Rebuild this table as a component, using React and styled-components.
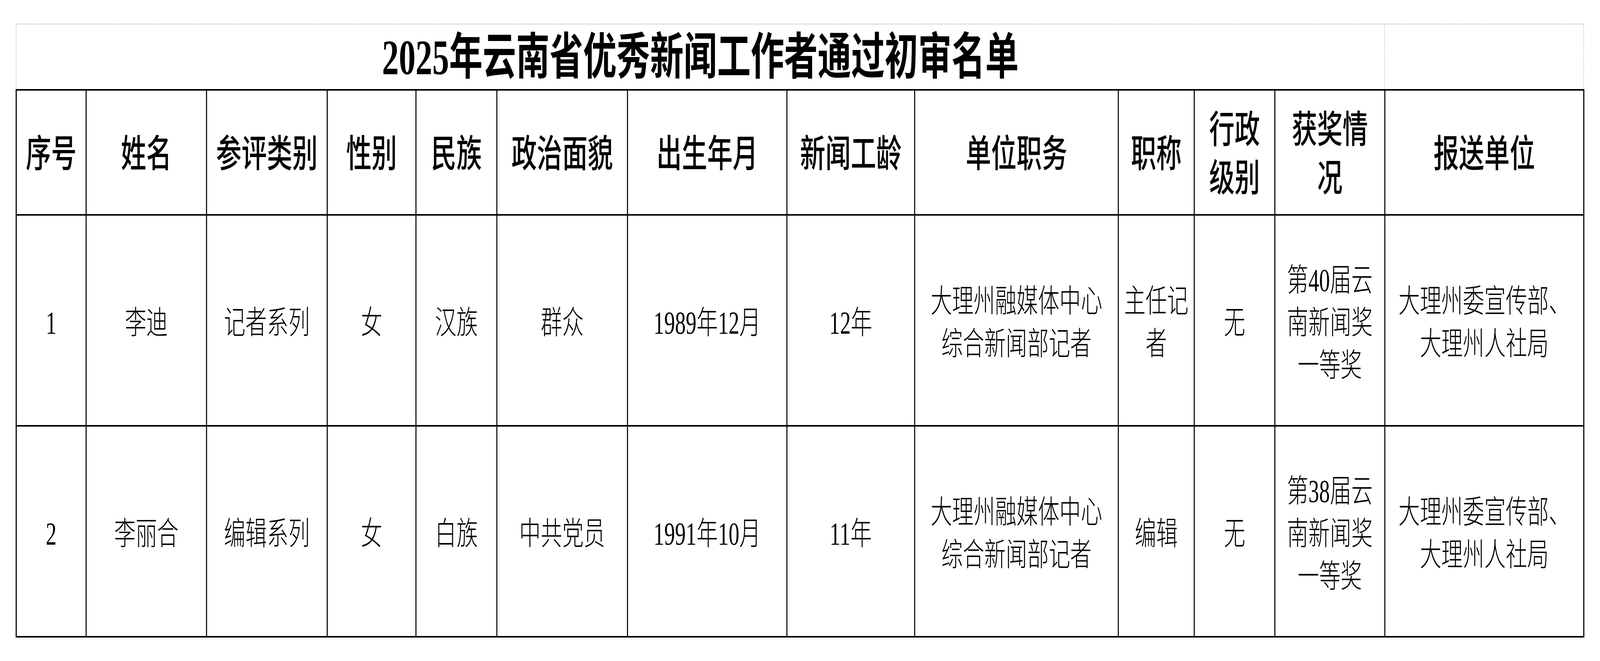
import React, { useLayoutEffect, useState } from 'react'
import styled, { createGlobalStyle } from 'styled-components'

const GlobalStyle = createGlobalStyle`
    html, body {
        margin: 0;
        padding: 0;
        background: #fff;
        overflow: hidden;
    }
    body {
        font-family: "Liberation Serif", "Noto Sans CJK SC", serif;
        color: #000;
    }
`

// the sheet is drawn at 6112 x 1692 and fitted to the window
const SHEET_W = 6112
const SHEET_H = 1692

// interior widths between the 4px grid lines
const COLS = [263, 456, 457, 335, 305, 495, 605, 484, 774, 286, 304, 416, 756]

const Viewport = styled.div`
    width: 100vw;
    height: 100vh;
    overflow: hidden;
`

const Sheet = styled.div`
    width: ${SHEET_W}px;
    height: ${SHEET_H}px;
    box-sizing: border-box;
    padding: 61px 0 0 60px;
    transform-origin: 0 0;
`

const TitleRow = styled.div`
    display: grid;
    grid-template-columns: 5228px 761px;
    height: 167px;
    margin-left: 1px;
`

const TitleCell = styled.div`
    display: flex;
    align-items: center;
    justify-content: center;
    box-sizing: border-box;
    border-top: 1px dotted #555;
    border-left: 1px dotted #555;
    border-right: ${p => (p.$last ? '1px dotted #555' : 'none')};
    font-family: "Liberation Serif", "Noto Sans CJK SC", serif;
    font-weight: 700;
    font-size: 128px;
    line-height: 1;
    white-space: nowrap;
    padding-top: 4px;
`

const Grid = styled.div`
    display: grid;
    grid-template-columns: ${COLS.map(w => `${w}px`).join(' ')};
    grid-template-rows: 316px 536px 536px;
    gap: 4px;
    width: fit-content;
    background: #000;
    border: 4px solid #000;
`

const Cell = styled.div`
    display: flex;
    align-items: center;
    justify-content: center;
    text-align: center;
    background: #fff;
    white-space: pre-line;
    box-sizing: border-box;
    padding-top: ${p => (p.$head ? '10px' : '12px')};
    font-family: "Liberation Serif", "Noto Sans CJK SC", serif;
    font-size: ${p => (p.$head ? '97px' : '82px')};
    line-height: ${p => (p.$head ? '124px' : '109px')};
    font-weight: ${p => (p.$head ? 500 : 300)};
`

const HEAD = [
    '序号', '姓名', '参评类别', '性别', '民族', '政治面貌', '出生年月', '新闻工龄',
    '单位职务', '职称', '行政\n级别', '获奖情\n况', '报送单位',
]

const ROWS = [
    [
        '1', '李迪', '记者系列', '女', '汉族', '群众', '1989年12月', '12年',
        '大理州融媒体中心\n综合新闻部记者', '主任记\n者', '无',
        '第40届云\n南新闻奖\n一等奖', '大理州委宣传部、\n大理州人社局',
    ],
    [
        '2', '李丽合', '编辑系列', '女', '白族', '中共党员', '1991年10月', '11年',
        '大理州融媒体中心\n综合新闻部记者', '编辑', '无',
        '第38届云\n南新闻奖\n一等奖', '大理州委宣传部、\n大理州人社局',
    ],
]

function useFit() {
    var [scale, setScale] = useState({ x: 1, y: 1 })

    useLayoutEffect(() => {
        function fit() {
            setScale({
                x: window.innerWidth / SHEET_W,
                y: Math.min(1, window.innerHeight / SHEET_H),
            })
        }
        fit()
        window.addEventListener('resize', fit)
        return () => window.removeEventListener('resize', fit)
    }, [])

    return scale
}

export default function App() {
    var scale = useFit()

    return (
        <Viewport>
            <GlobalStyle />
            <Sheet style={{ transform: `scale(${scale.x}, ${scale.y})` }}>
                <TitleRow>
                    <TitleCell>2025年云南省优秀新闻工作者通过初审名单</TitleCell>
                    <TitleCell $last />
                </TitleRow>
                <Grid>
                    {HEAD.map((h, i) => (
                        <Cell key={'h' + i} $head>{h}</Cell>
                    ))}
                    {ROWS.map((row, r) =>
                        row.map((v, i) => <Cell key={r + '-' + i}>{v}</Cell>)
                    )}
                </Grid>
            </Sheet>
        </Viewport>
    )
}
